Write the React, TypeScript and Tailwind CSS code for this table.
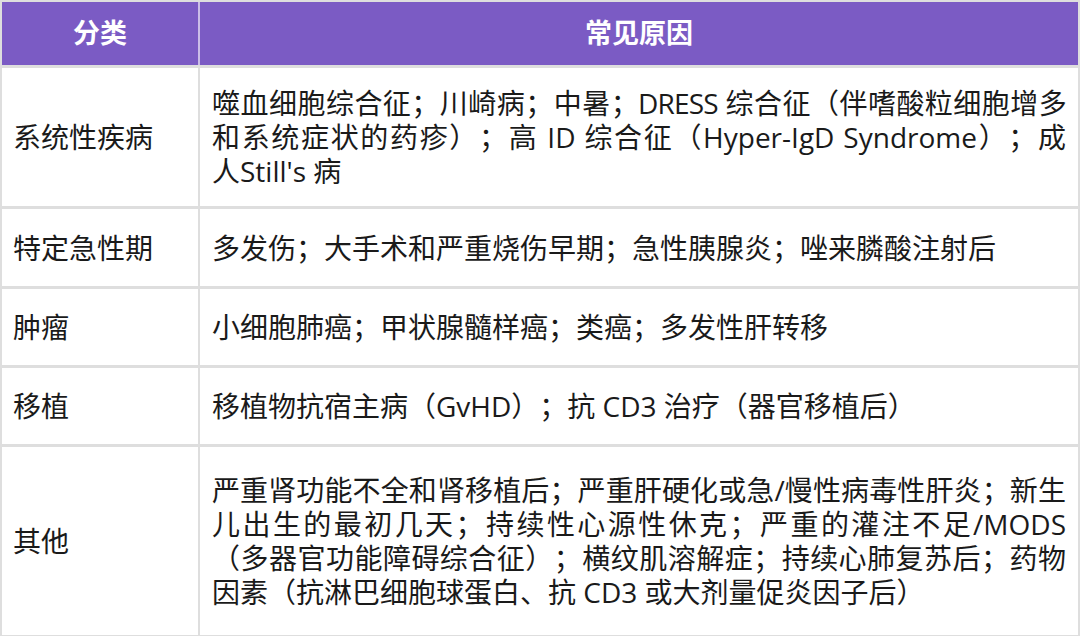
type Line = { text: string; last?: boolean; tight?: boolean }

const rows: { name: string; lines: Line[]; height: string }[] = [
  {
    name: '系统性疾病',
    lines: [
      { text: '噬血细胞综合征；川崎病；中暑；DRESS 综合征（伴嗜酸粒细胞增多', tight: true },
      { text: '和系统症状的药疹）；高 ID 综合征（Hyper-IgD Syndrome）；成' },
      { text: "人Still's 病", last: true },
    ],
    height: 'h-[141px]',
  },
  {
    name: '特定急性期',
    lines: [{ text: '多发伤；大手术和严重烧伤早期；急性胰腺炎；唑来膦酸注射后', last: true }],
    height: 'h-[80px]',
  },
  {
    name: '肿瘤',
    lines: [{ text: '小细胞肺癌；甲状腺髓样癌；类癌；多发性肝转移', last: true }],
    height: 'h-[79px]',
  },
  {
    name: '移植',
    lines: [{ text: '移植物抗宿主病（GvHD）；抗 CD3 治疗（器官移植后）', last: true }],
    height: 'h-[79px]',
  },
  {
    name: '其他',
    lines: [
      { text: '严重肾功能不全和肾移植后；严重肝硬化或急/慢性病毒性肝炎；新生' },
      { text: '儿出生的最初几天；持续性心源性休克；严重的灌注不足/MODS' },
      { text: '（多器官功能障碍综合征）；横纹肌溶解症；持续心肺复苏后；药物' },
      { text: '因素（抗淋巴细胞球蛋白、抗 CD3 或大剂量促炎因子后）', last: true },
    ],
    height: 'h-[191px]',
  },
]

export default function App() {
  return (
    <div
      className="h-[636px] w-[1080px] bg-white text-[#1a1a1a] [text-spacing-trim:space-all]"
      style={{ fontFamily: '"Open Sans", "Noto Sans CJK SC", sans-serif' }}
    >
      <div className="w-[1080px] border-2 border-[#dedede]">
        <div className="grid h-[63px] grid-cols-[198px_1fr] bg-[#7b5bc4] text-[27px] font-bold text-white">
          <div className="flex items-center justify-center border-r-2 border-[#cbbde8]">分类</div>
          <div className="flex items-center justify-center">常见原因</div>
        </div>
        {rows.map((row) => (
          <div key={row.name} className={`grid grid-cols-[198px_1fr] border-t-[3px] border-[#dedede] ${row.height}`}>
            <div className="flex items-center border-r-2 border-[#dedede] pl-[11px] text-[28px]">{row.name}</div>
            <div className="flex flex-col justify-center pl-[12px] pr-[12px] text-[28px] leading-[34px]">
              {row.lines.map((line) => (
                <div
                  key={line.text}
                  className={
                    line.last
                      ? 'whitespace-nowrap'
                      : `whitespace-nowrap text-justify [text-align-last:justify] ${line.tight ? 'tracking-[-0.8px]' : ''}`
                  }
                >
                  {line.text}
                </div>
              ))}
            </div>
          </div>
        ))}
      </div>
    </div>
  )
}
